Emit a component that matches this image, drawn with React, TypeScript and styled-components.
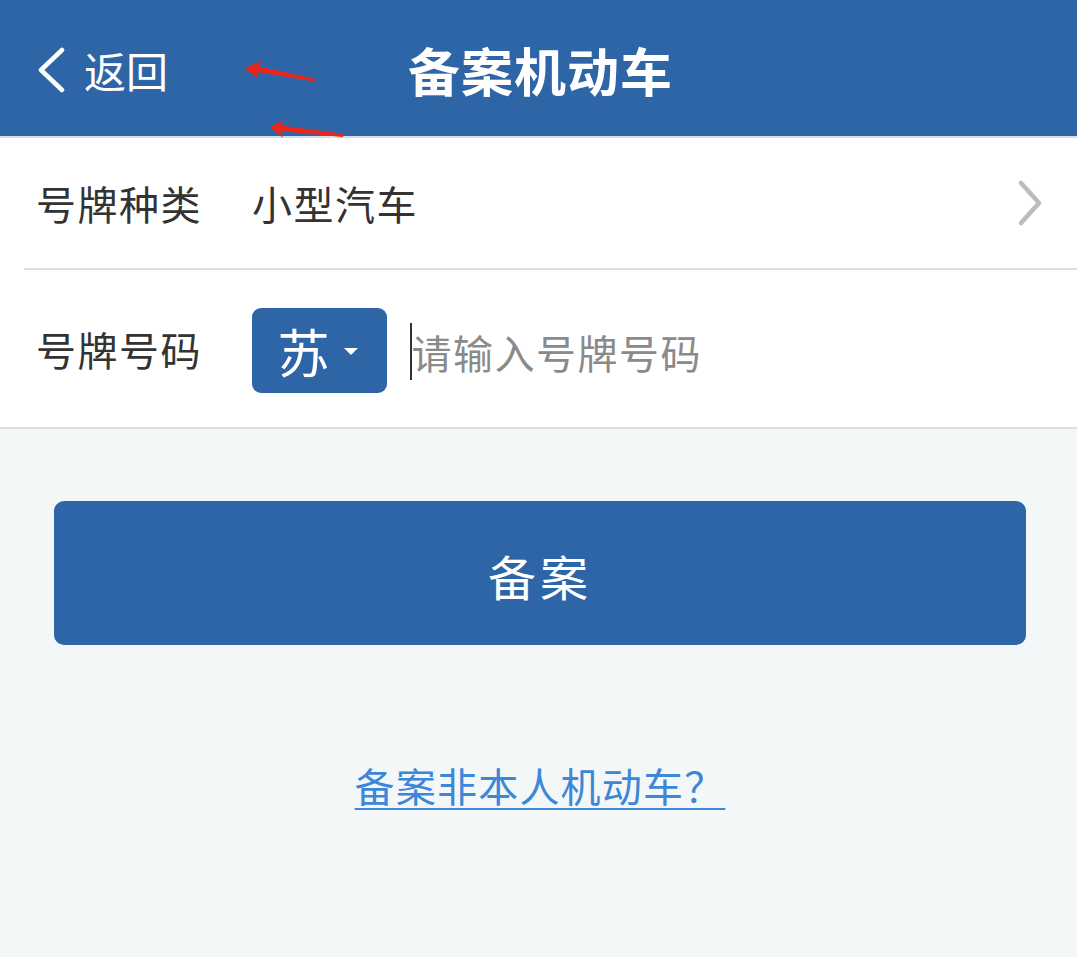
import React from 'react';
import styled, {createGlobalStyle} from "styled-components";

const GlobalStyle = createGlobalStyle`
  html, body {
    margin: 0;
    padding: 0;
    background: #f4f7f8;
    font-family: "Noto Sans CJK SC", "Noto Sans", sans-serif;
  }
  #root {
    min-height: 957px;
  }
`

const Page = styled.div`
  position: relative;
  width: 1077px;
  min-height: 957px;
  background: #f4f7f8;
`

const Header = styled.header`
  height: 136px;
  background: #2d65a7;
  border-bottom: 2px solid #d3deec;
  display: grid;
  grid-template-columns: 1fr auto 1fr;
  align-items: center;
`

const BackButton = styled.div`
  display: flex;
  align-items: center;
  gap: 18px;
  padding-left: 36px;
  color: #ffffff;
  font-size: 42px;
  line-height: 1;
  padding-top: 4px;
`

const Title = styled.h1`
  margin: 0;
  color: #ffffff;
  font-size: 52px;
  font-weight: 700;
  letter-spacing: 1px;
  padding-left: 4px;
  padding-top: 2px;
`

const Annotations = styled.svg`
  position: absolute;
  left: 0;
  top: 0;
  pointer-events: none;
`

const Form = styled.section`
  background: #ffffff;
  border-bottom: 2px solid #dddddd;
`

const Row = styled.div<{divider?: boolean; height: number}>`
  height: ${props => props.height}px;
  margin-left: ${props => props.divider ? 24 : 0}px;
  padding-left: ${props => props.divider ? 12 : 36}px;
  padding-right: 34px;
  display: flex;
  align-items: center;
  border-bottom: ${props => props.divider ? "2px solid #dddddd" : "none"};
`

const Label = styled.span`
  width: 216px;
  flex-shrink: 0;
  color: #333333;
  font-size: 40px;
  letter-spacing: 1.5px;
`

const Value = styled.span`
  flex: 1;
  color: #333333;
  font-size: 40px;
  letter-spacing: 1.5px;
`

const Province = styled.div`
  width: 135px;
  height: 85px;
  border-radius: 9px;
  background: #2d65a7;
  color: #ffffff;
  display: flex;
  align-items: center;
  justify-content: center;
  gap: 14px;
  font-size: 52px;
  flex-shrink: 0;
  margin-top: 4px;
  padding-right: 4px;
  box-sizing: border-box;
`

const Caret = styled.span`
  width: 0;
  height: 0;
  border-left: 7px solid transparent;
  border-right: 7px solid transparent;
  border-top: 7px solid #ffffff;
  margin-top: 2px;
`

const InputField = styled.div`
  display: flex;
  align-items: center;
  margin-left: 23px;
  margin-top: 6px;
`

const TextCursor = styled.span`
  width: 1.5px;
  height: 57px;
  background: #333333;
  margin-right: 0;
`

const Placeholder = styled.span`
  color: #8a8a8a;
  font-size: 40px;
  letter-spacing: 1.5px;
`

const Actions = styled.div`
  padding: 72px 51px 0 54px;
  display: flex;
  flex-direction: column;
  align-items: center;
`

const SubmitButton = styled.button`
  width: 100%;
  height: 144px;
  border: none;
  border-radius: 10px;
  background: #2d65a7;
  color: #ffffff;
  font-family: inherit;
  font-size: 48px;
  letter-spacing: 4px;
  padding: 4px 0 0;
`

const OtherLink = styled.a`
  margin-top: 112px;
  color: #3d87d8;
  font-size: 40px;
  line-height: 56px;
  text-decoration: underline;
  text-underline-offset: 6px;
  text-decoration-thickness: 2px;
  letter-spacing: 1.2px;
  cursor: pointer;
`

const ChevronLeft = () => (
    <svg width="30" height="46" viewBox="0 0 30 46">
        <path d="M26 3 L5 23 L26 43" fill="none" stroke="#ffffff" strokeWidth="4.5" strokeLinecap="round" strokeLinejoin="round"/>
    </svg>
)

const ChevronRight = () => (
    <svg width="26" height="48" viewBox="0 0 26 48">
        <path d="M4 4 L22 24 L4 44" fill="none" stroke="#bcbcbc" strokeWidth="4.5" strokeLinecap="round" strokeLinejoin="round"/>
    </svg>
)

export default function App() {
    return (
        <Page>
            <GlobalStyle/>
            <Header>
                <BackButton>
                    <ChevronLeft/>
                    返回
                </BackButton>
                <Title>备案机动车</Title>
                <div/>
            </Header>

            <Annotations width="1077" height="140" viewBox="0 0 1077 140">
                <polygon points="245,68 262,61 259,66.5 316,79 315,81.5 258,72 257,78" fill="#ef2418"/>
                <polygon points="270,127 284,120 281,125.5 344,134 343,137 280,131 283,138" fill="#ef2418"/>
            </Annotations>

            <Form>
                <Row divider height={130}>
                    <Label>号牌种类</Label>
                    <Value>小型汽车</Value>
                    <ChevronRight/>
                </Row>
                <Row height={157}>
                    <Label>号牌号码</Label>
                    <Province>
                        苏
                        <Caret/>
                    </Province>
                    <InputField>
                        <TextCursor/>
                        <Placeholder>请输入号牌号码</Placeholder>
                    </InputField>
                </Row>
            </Form>

            <Actions>
                <SubmitButton>备案</SubmitButton>
                <OtherLink>备案非本人机动车？</OtherLink>
            </Actions>
        </Page>
    );
}
